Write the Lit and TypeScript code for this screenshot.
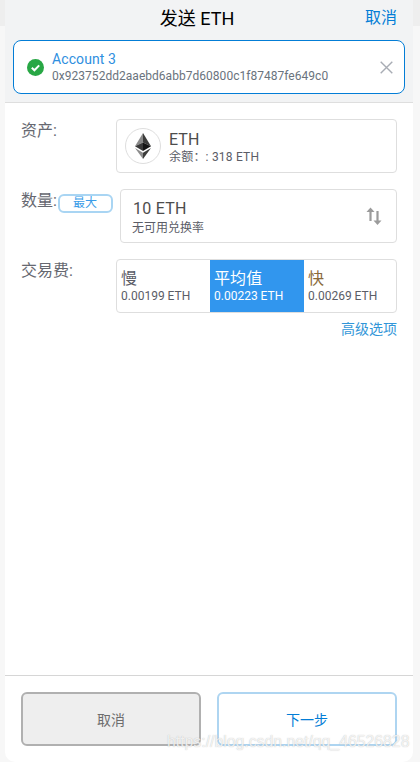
import { LitElement, html, css } from "lit";
import { customElement } from "lit/decorators.js";

@customElement("app-root")
export class AppRoot extends LitElement {
  static styles = css`
    :host { display: block; height: 762px; background: linear-gradient(#eeeeee 0 26px, #f7f7f7 26px); font-family: Roboto, "Noto Sans CJK SC", sans-serif; color: #5b5d67; overflow: hidden; position: relative; }
    .panel { width: 408px; height: 762px; margin-left: 5px; background: #fff; border-radius: 0 0 10px 10px; display: flex; flex-direction: column; overflow: hidden; }
    .head { background: #f2f3f4; height: 102px; border-bottom: 1px solid #dedede; padding: 0 8px; display: flex; flex-direction: column; flex: none; box-sizing: content-box; }
    .titlebar { height: 40px; position: relative; display: flex; justify-content: center; align-items: center; padding-right: 24px; box-sizing: border-box; }
    .title { font-size: 18px; color: #000; line-height: 40px; margin-top: -2px; }
    .cancel { position: absolute; right: 8px; top: 7px; color: #037dd6; font-size: 16px; line-height: 22px; }
    .account { height: 52px; border: 1px solid #037dd6; border-radius: 8px; background: #fff; display: flex; align-items: center; padding: 0 11px 0 13px; }
    .check { width: 17px; height: 17px; flex: none; margin-right: 8px; }
    .acc-text { flex: 1; min-width: 0; padding-top: 2px; }
    .acc-name { color: #2f8fe0; font-size: 14px; line-height: 17px; margin-top: -2px; letter-spacing: 0.1px; }
    .acc-addr { color: #6a737d; font-size: 12px; line-height: 15px; margin-top: 1px; letter-spacing: 0.03px; }
    .x { width: 13px; height: 13px; flex: none; }
    .body { flex: 1; padding: 16px 16px 0; display: flex; flex-direction: column; }
    .row { display: flex; margin-bottom: 16px; }
    .label { width: 95px; flex: none; font-size: 16px; line-height: 24px; color: #666870; }
    .box { flex: 1; height: 54px; box-sizing: border-box; border: 1px solid #dedede; border-radius: 4px; display: flex; align-items: center; }
    .asset { padding-left: 8px; }
    .icon { width: 36px; height: 36px; border-radius: 50%; border: 1px solid #dedede; box-sizing: border-box; display: flex; align-items: center; justify-content: center; margin-right: 8px; flex: none; }
    .text { padding-top: 2px; }
    .big { font-size: 16px; line-height: 20px; color: #4d4d4d; letter-spacing: 0.1px; }
    .small { font-size: 12px; line-height: 15px; color: #5b5d67; letter-spacing: 0.2px; }
    .qty { display: flex; flex: none; width: 99px; align-items: flex-start; }
    .qty .label { width: 37px; flex: none; }
    .max { width: 55px; height: 19px; box-sizing: border-box; margin-top: 5px; border: 2px solid #a9d5f3; border-radius: 6px; color: #3a9ce8; font-size: 12px; line-height: 15px; text-align: center; padding-right: 1px; }
    .amount { padding: 0 13px 0 11px; justify-content: space-between; }
    .amount .big { padding-left: 1px; letter-spacing: 0.25px; }
    .amount .small { letter-spacing: 0; margin-top: 2px; }
    .swap { width: 16px; height: 20px; flex: none; margin-right: 1px; }
    .fees { align-items: stretch; overflow: hidden; }
    .fee { width: 93px; flex: none; box-sizing: border-box; padding: 9px 0 0 4px; }
    .fee.on { background: #3196ee; width: 94px; }
    .fee.on .big, .fee.on .small { color: #fff; }
    .fee .big { font-size: 16px; line-height: 20px; color: #5b5d67; }
    .fee .small { margin-top: 0; letter-spacing: 0; }
    .fee.fast .big { color: #8a6a3a; }
    .adv { text-align: right; color: #3196d8; font-size: 14px; line-height: 20px; margin-top: -10px; }
    .foot { height: 87px; flex: none; border-top: 1px solid #d6d6d6; box-sizing: border-box; padding: 16px 16px 0; display: flex; gap: 16px; }
    .btn { flex: 1; height: 54px; box-sizing: border-box; border-radius: 6px; display: flex; align-items: center; justify-content: center; font-size: 14px; padding-bottom: 1px; }
    .btn.c { background: #eeeeee; border: 2px solid #b0b0b0; color: #6d6d6d; }
    .btn.n { background: #fff; border: 2px solid #aed5f1; color: #037dd6; }
    .wm { position: absolute; left: 167px; top: 731px; font-size: 15.8px; line-height: 22px; color: rgba(255,255,255,0.8); text-shadow: 0 0 1px rgba(130,130,130,0.55); white-space: nowrap; font-family: "Liberation Sans", sans-serif; }
  `;

  render() {
    return html`
      <div class="panel">
        <div class="head">
          <div class="titlebar">
            <div class="title">发送 ETH</div>
            <div class="cancel">取消</div>
          </div>
          <div class="account">
            <svg class="check" viewBox="0 0 17 17">
              <circle cx="8.5" cy="8.5" r="8.5" fill="#28a745"/>
              <path d="M4.8 8.8 L7.4 11.3 L12.2 6.4" fill="none" stroke="#fff" stroke-width="2"/>
            </svg>
            <div class="acc-text">
              <div class="acc-name">Account 3</div>
              <div class="acc-addr">0x923752dd2aaebd6abb7d60800c1f87487fe649c0</div>
            </div>
            <svg class="x" viewBox="0 0 13 13">
              <path d="M.7.7 12.3 12.3M12.3.7.7 12.3" stroke="#a8acb4" stroke-width="1.4" fill="none"/>
            </svg>
          </div>
        </div>
        <div class="body">
          <div class="row">
            <div class="label">资产:</div>
            <div class="box asset">
              <div class="icon">
                <svg width="16" height="26" viewBox="0 0 16 26">
                  <path d="M8 0 L0 13.2 L8 9.6Z" fill="#8a8a8a"/>
                  <path d="M8 0 L16 13.2 L8 9.6Z" fill="#3c3c3b"/>
                  <path d="M0 13.2 L8 9.6 V18Z" fill="#393939"/>
                  <path d="M16 13.2 L8 9.6 V18Z" fill="#141414"/>
                  <path d="M0 15 L8 26 V19.8Z" fill="#8c8c8c"/>
                  <path d="M16 15 L8 26 V19.8Z" fill="#3c3c3b"/>
                </svg>
              </div>
              <div class="text">
                <div class="big">ETH</div>
                <div class="small">余额：: 318 ETH</div>
              </div>
            </div>
          </div>
          <div class="row">
            <div class="qty">
              <div class="label">数量:</div>
              <div class="max">最大</div>
            </div>
            <div class="box amount">
              <div class="text">
                <div class="big">10 ETH</div>
                <div class="small">无可用兑换率</div>
              </div>
              <svg class="swap" viewBox="0 0 16 20">
                <path d="M4.5 15V5" stroke="#9b9b9b" stroke-width="2.2" fill="none"/>
                <path d="M.5 6 4.5 1.5 8.5 6Z" fill="#9b9b9b"/>
                <path d="M11.5 5V15" stroke="#9b9b9b" stroke-width="2.2" fill="none"/>
                <path d="M7.5 14.5 11.5 19 15.5 14.5Z" fill="#9b9b9b"/>
              </svg>
            </div>
          </div>
          <div class="row">
            <div class="label">交易费:</div>
            <div class="box fees">
              <div class="fee"><div class="big">慢</div><div class="small">0.00199 ETH</div></div>
              <div class="fee on"><div class="big">平均值</div><div class="small">0.00223 ETH</div></div>
              <div class="fee fast"><div class="big">快</div><div class="small">0.00269 ETH</div></div>
            </div>
          </div>
          <div class="adv">高级选项</div>
        </div>
        <div class="foot">
          <div class="btn c">取消</div>
          <div class="btn n">下一步</div>
        </div>
      </div>
      <div class="wm">https://blog.csdn.net/qq_46526828</div>
    `;
  }
}
